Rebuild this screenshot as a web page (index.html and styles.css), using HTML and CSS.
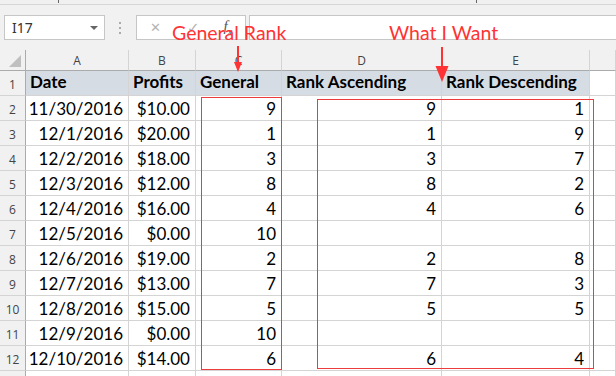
FILE: index.html
```html
<!DOCTYPE html>
<html>
<head>
<meta charset="utf-8">
<link rel="stylesheet" href="styles.css">
</head>
<body>
<div class="ribbon-edge"><span class="tick t1"></span><span class="tick t2"></span></div>
<div class="fbar">
  <div class="namebox"><span>I17</span><span class="caret"></span></div>
  <div class="grip"><i></i><i></i><i></i></div>
  <div class="fbtns"><span class="x">✕</span><span class="ok">✓</span><span class="fx">f<sub>x</sub></span></div>
  <div class="finput"></div>
</div>
<div class="sheet">
  <div class="c corner"><span class="tri"></span></div>
  <div class="c ch">A</div><div class="c ch">B</div><div class="c ch">C</div><div class="c ch">D</div><div class="c ch">E</div><div class="c ch"></div>

  <div class="c rh">1</div>
  <div class="c h">Date</div><div class="c h">Profits</div><div class="c h">General</div><div class="c h">Rank Ascending</div><div class="c h">Rank Descending</div><div class="c"></div>

  <div class="c rh">2</div>
  <div class="c r">11/30/2016</div><div class="c r">$10.00</div><div class="c r">9</div><div class="c r">9</div><div class="c r">1</div><div class="c"></div>

  <div class="c rh">3</div>
  <div class="c r">12/1/2016</div><div class="c r">$20.00</div><div class="c r">1</div><div class="c r">1</div><div class="c r">9</div><div class="c"></div>

  <div class="c rh">4</div>
  <div class="c r">12/2/2016</div><div class="c r">$18.00</div><div class="c r">3</div><div class="c r">3</div><div class="c r">7</div><div class="c"></div>

  <div class="c rh">5</div>
  <div class="c r">12/3/2016</div><div class="c r">$12.00</div><div class="c r">8</div><div class="c r">8</div><div class="c r">2</div><div class="c"></div>

  <div class="c rh">6</div>
  <div class="c r">12/4/2016</div><div class="c r">$16.00</div><div class="c r">4</div><div class="c r">4</div><div class="c r">6</div><div class="c"></div>

  <div class="c rh">7</div>
  <div class="c r">12/5/2016</div><div class="c r">$0.00</div><div class="c r">10</div><div class="c r"></div><div class="c r"></div><div class="c"></div>

  <div class="c rh">8</div>
  <div class="c r">12/6/2016</div><div class="c r">$19.00</div><div class="c r">2</div><div class="c r">2</div><div class="c r">8</div><div class="c"></div>

  <div class="c rh">9</div>
  <div class="c r">12/7/2016</div><div class="c r">$13.00</div><div class="c r">7</div><div class="c r">7</div><div class="c r">3</div><div class="c"></div>

  <div class="c rh">10</div>
  <div class="c r">12/8/2016</div><div class="c r">$15.00</div><div class="c r">5</div><div class="c r">5</div><div class="c r">5</div><div class="c"></div>

  <div class="c rh">11</div>
  <div class="c r">12/9/2016</div><div class="c r">$0.00</div><div class="c r">10</div><div class="c r"></div><div class="c r"></div><div class="c"></div>

  <div class="c rh">12</div>
  <div class="c r">12/10/2016</div><div class="c r">$14.00</div><div class="c r">6</div><div class="c r">6</div><div class="c r">4</div><div class="c"></div>

  <div class="c rh last"></div>
  <div class="c last"></div><div class="c last"></div><div class="c last"></div><div class="c last"></div><div class="c last"></div><div class="c last"></div>
</div>

<div class="box b1"></div>
<div class="box b2"></div>
<div class="note n1">General Rank</div>
<div class="note n2">What I Want</div>
<svg class="arrow a1" width="12" height="28" viewBox="0 0 12 28"><line x1="6" y1="1" x2="6" y2="18" stroke="#f33" stroke-width="2"/><polygon points="2,17 10,17 6,27" fill="#f33"/></svg>
<svg class="arrow a2" width="14" height="37" viewBox="0 0 14 37"><line x1="7" y1="1" x2="7" y2="22" stroke="#f33" stroke-width="2"/><polygon points="0.5,20 13.5,20 7,36" fill="#f33"/></svg>
</body>
</html>
```
FILE: styles.css
```css
body {
  margin: 0;
  width: 616px;
  height: 376px;
  overflow: hidden;
  background: #fff;
  position: relative;
  font-family: Lato, "Liberation Sans", sans-serif;
}
.ribbon-edge {
  height: 4px;
  background: #f0f0f0;
  border-bottom: 1px solid #d6d6d6;
  display: flex;
}
.tick { width: 1px; height: 3px; background: #666; }
.t1 { margin-left: 58px; }
.t2 { margin-left: 417px; }
.fbar {
  height: 45px;
  box-sizing: border-box;
  background: #f1f1f1;
  display: flex;
  align-items: flex-start;
  padding-top: 10px;
}
.namebox {
  margin-left: 4px;
  width: 101px;
  height: 25px;
  box-sizing: border-box;
  border: 1px solid #c6c6c6;
  background: #fff;
  display: flex;
  align-items: center;
  justify-content: space-between;
  padding: 0 6px 0 7px;
  font: 14px "Noto Sans", "Open Sans", sans-serif;
  color: #333;
}
.caret {
  width: 0; height: 0;
  border-left: 4px solid transparent;
  border-right: 4px solid transparent;
  border-top: 4px solid #666;
}
.grip {
  margin-left: 14px;
  margin-top: 7px;
  display: flex;
  flex-direction: column;
  gap: 3px;
}
.grip i { display: block; width: 2px; height: 2px; background: #aaa; }
.fbtns {
  margin-left: 15px;
  width: 110px;
  height: 25px;
  box-sizing: border-box;
  border: 1px solid #c6c6c6;
  background: #fff;
  display: flex;
  align-items: center;
  color: #b4b4b4;
}
.fbtns .x { margin-left: 13px; font: 13px "DejaVu Sans", sans-serif; }
.fbtns .ok { margin-left: 26px; font: 15px "DejaVu Sans", sans-serif; }
.fbtns .fx { margin-left: 24px; font: italic 15px "Liberation Serif", serif; color: #555; }
.fbtns .fx sub { font-size: 10px; }
.finput {
  margin-left: 3px;
  flex: 1;
  height: 25px;
  box-sizing: border-box;
  border: 1px solid #c6c6c6;
  border-right: none;
  background: #fff;
}
.sheet {
  display: grid;
  grid-template-columns: 26px 103px 67px 86px 160px 148px 26px;
  grid-template-rows: 21px repeat(12, 25px) 6px;
}
.c {
  box-sizing: border-box;
  border-right: 1px solid #d4d4d4;
  border-bottom: 1px solid #d4d4d4;
  display: flex;
  align-items: flex-end;
  padding: 0 5px 1px 4px;
  line-height: 20px;
  font-size: 17px;
  color: #000;
  white-space: nowrap;
  overflow: hidden;
}
.c.last { border-bottom: none; }
.r { justify-content: flex-end; }
.h {
  background: #d6dce4;
  font-weight: bold;
  padding-bottom: 3px;
}
.ch, .rh, .corner {
  background: #f1f1f1;
  font: 12px "Open Sans", "Noto Sans", sans-serif;
  color: #444;
  justify-content: center;
  align-items: center;
  padding: 0;
}
.ch { border-bottom-color: #ababab; }
.ch:last-child { border-right: none; }
.rh { border-right-color: #ababab; padding-top: 3px; }
.corner {
  border-right-color: #ababab;
  border-bottom-color: #ababab;
  position: relative;
}
.tri {
  position: absolute;
  right: 4px;
  bottom: 3px;
  width: 0; height: 0;
  border-left: 12px solid transparent;
  border-bottom: 12px solid #bfbfbf;
}
.box {
  position: absolute;
  border: 1px solid #ee3b3b;
}
.b1 { left: 201px; top: 97px; width: 79px; height: 271px; }
.b2 { left: 317px; top: 99px; width: 275px; height: 268px; }
.note {
  position: absolute;
  color: #ff3333;
  font: 19.5px/19px Lato, "Liberation Sans", sans-serif;
  white-space: nowrap;
}
.n1 { left: 172px; top: 23px; }
.n2 { left: 389px; top: 23px; }
.arrow { position: absolute; }
.a1 { left: 232px; top: 45px; }
.a2 { left: 435px; top: 46px; }
```
